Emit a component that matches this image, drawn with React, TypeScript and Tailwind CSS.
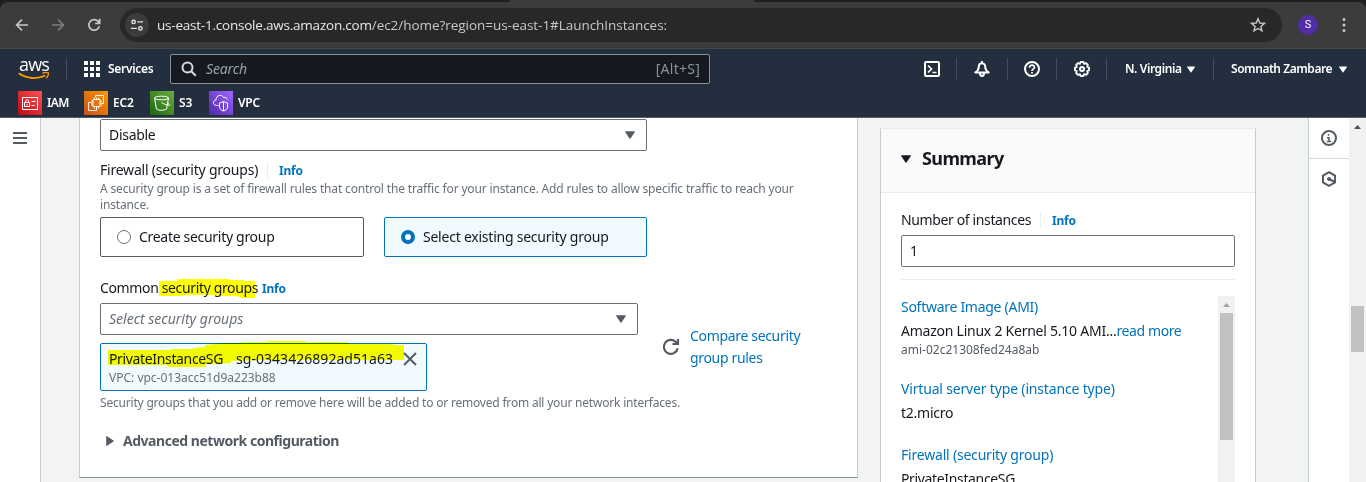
import React from "react";

const Caret = ({ className = "" }: { className?: string }) => (
  <svg className={`shrink-0 ${className}`} width="10" height="8" viewBox="0 0 10 8" fill="currentColor">
    <path d="M0.6 0.2h8.8c.5 0 .7.5.4.9L5.5 7.5c-.2.4-.8.4-1 0L.2 1.1C-.1.7.1.2.6.2z" />
  </svg>
);

const Info = ({ className = "" }: { className?: string }) => (
  <a className={`pt-[2px] text-[12px] font-bold tracking-[-0.2px] text-[#0073bb] ${className}`}>Info</a>
);

function BrowserBar() {
  return (
    <div className="h-[49px] bg-[#202020] pt-[2px]">
      <div className="relative flex h-[47px] items-center rounded-t-[8px] border-b border-[#4a4a4a] bg-[#3c3c3c]">
        <div className="absolute -top-[2px] left-[510px] h-[2px] w-[244px] bg-[#3c3c3c]" />
        <svg className="ml-[14px] shrink-0" width="16" height="16" viewBox="0 0 16 16" fill="none" stroke="#c7c7c7" strokeWidth="1.6">
          <path d="M14 8H3M8 2.6L2.6 8L8 13.4" />
        </svg>
        <svg className="ml-[20px] shrink-0" width="16" height="16" viewBox="0 0 16 16" fill="none" stroke="#7d7d7d" strokeWidth="1.6">
          <path d="M2 8h11M8 2.6L13.4 8L8 13.4" />
        </svg>
        <svg className="ml-[20px] shrink-0" width="16" height="16" viewBox="0 0 16 16" fill="none" stroke="#c7c7c7" strokeWidth="1.7">
          <path d="M13.3 9.2A5.3 5.3 0 1 1 12 4.2L13.6 6M13.7 1.8V6.3H9.2" />
        </svg>
        <div className="ml-[18px] flex h-[34px] w-[1162px] items-center rounded-full bg-[#282828]">
          <div className="ml-[5px] flex h-6 w-6 items-center justify-center rounded-full bg-[#3c3c3c]">
            <svg width="14" height="14" viewBox="0 0 14 14" fill="none" stroke="#e3e3e3" strokeWidth="1.4">
              <circle cx="3.6" cy="3.9" r="1.7" />
              <path d="M7.3 3.9H13M1 10.4h5.8" />
              <circle cx="10.4" cy="10.4" r="1.7" />
            </svg>
          </div>
          <div className="ml-2 pt-px font-['Open_Sans'] text-[13.5px] whitespace-nowrap text-[#c7c7c7]">
            <span className="tracking-[-0.22px] text-[#e8e8e8]">us-east-1.console.aws.amazon.com</span>
            <span className="tracking-[-0.04px]">/ec2/home?region=us-east-1#LaunchInstances:</span>
          </div>
          <svg className="mr-[16px] ml-auto" width="16" height="16" viewBox="0 0 16 16" fill="none" stroke="#c7c7c7" strokeWidth="1.4">
            <path d="M8 1.8l1.8 4.2 4.6.4-3.5 3 1.1 4.5L8 11.5l-4 2.4 1.1-4.5-3.5-3 4.6-.4z" />
          </svg>
        </div>
        <div className="ml-[16px] flex h-5 w-5 items-center justify-center rounded-full bg-[#512da8] pt-px font-['Roboto'] text-[11px] text-white">S</div>
        <svg className="ml-[24px]" width="4" height="16" viewBox="0 0 4 16" fill="#c7c7c7">
          <circle cx="2" cy="2.6" r="1.5" />
          <circle cx="2" cy="8" r="1.5" />
          <circle cx="2" cy="13.4" r="1.5" />
        </svg>
      </div>
    </div>
  );
}

const Divider = ({ className = "" }: { className?: string }) => (
  <div className={`h-[22px] w-px shrink-0 bg-[#414d5c] ${className}`} />
);

function NavBar() {
  return (
    <div className="flex h-10 items-center bg-[#232f3e] text-[12px] font-semibold whitespace-nowrap text-white">
      <div className="relative ml-[18px] h-[22px] w-[31px]">
        <div className="absolute -top-[5px] left-px font-['Open_Sans'] text-[18px] leading-[22px] font-medium tracking-[-0.8px]">aws</div>
        <svg className="absolute top-[14px] left-0" width="31" height="9" viewBox="0 0 31 9" fill="none">
          <path d="M.8 1.3C8.500 6.800 19.500 7.600 27.200 3.500" stroke="#ff9900" strokeWidth="1.900" />
          <path d="M24.500 1.300C27 .300 29.700.300 30.200 1C30.700 2 29.700 4.500 28.200 6.300" stroke="#ff9900" strokeWidth="1.400" />
        </svg>
      </div>
      <Divider className="ml-[17px]" />
      <svg className="ml-[17px]" width="16" height="16" viewBox="0 0 16 16" fill="white">
        {[0, 6, 12].map((y) => [0, 6, 12].map((x) => <rect key={`${x}-${y}`} x={x} y={y} width="4" height="4" />))}
      </svg>
      <div className="ml-2 w-[62px] tracking-[-0.3px]">Services</div>
      <div className="flex h-[30px] w-[540px] items-center rounded-[2px] border border-[#879596] bg-[#16191f] font-normal text-[#879596]">
        <svg className="ml-[10px]" width="16" height="16" viewBox="0 0 16 16" fill="none" stroke="#d5dbdb" strokeWidth="2">
          <circle cx="6.500" cy="6.500" r="5" />
          <path d="M10.200 10.200l4.600 4.600" />
        </svg>
        <div className="ml-[9px] pb-px text-[14px] tracking-[-0.15px] text-[#95a5a6] italic">Search</div>
        <div className="mr-[9px] ml-auto pb-px text-[14px] tracking-[0.25px]">[Alt+S]</div>
      </div>
      <svg className="ml-[214px]" width="16" height="16" viewBox="0 0 16 16" fill="none" stroke="white" strokeWidth="2">
        <rect x="1" y="1" width="14" height="14" rx="1" />
        <path d="M4 4.500L7.500 8L4 11.500M8.500 11.500h4" strokeWidth="1.700" />
      </svg>
      <Divider className="ml-[16px]" />
      <svg className="ml-[17px]" width="16" height="16" viewBox="0 0 16 16" fill="none" stroke="white" strokeWidth="2" strokeLinejoin="round">
        <path d="M8 0v2.300M8 2.300C5.700 2.300 4.700 4 4.700 6.500C4.700 8.700 3 10.200 1.300 11.500H14.700C13 10.200 11.300 8.700 11.300 6.500C11.300 4 10.300 2.300 8 2.300zM6 12c0 3.900 4 3.900 4 0" />
      </svg>
      <Divider className="ml-[17px]" />
      <svg className="ml-[16px]" width="16" height="16" viewBox="0 0 16 16" fill="none" stroke="white" strokeWidth="2">
        <circle cx="8" cy="8" r="7" />
        <path d="M5.500 6.700C5.500 3.300 10.500 3.500 10.500 6.300C10.500 8 8 7.800 8 10M8 11v1.600" strokeWidth="1.700" />
      </svg>
      <Divider className="ml-[16px]" />
      <svg className="ml-[17px]" width="16" height="16" viewBox="0 0 16 16" fill="none" stroke="white" strokeWidth="2" strokeLinejoin="round">
        <path d="M6.600 1h2.800l.7 1.800 2-.6 1.700 1.700-.6 2 1.800.7v2.800l-1.800.7.6 2-1.700 1.700-2-.6-.7 1.800H6.600l-.7-1.800-2 .6-1.700-1.700.6-2L1 9.400V6.600l1.800-.7-.6-2 1.700-1.700 2 .6z" strokeWidth="1.900" />
        <circle cx="8" cy="8" r="2" />
      </svg>
      <Divider className="ml-[16px]" />
      <div className="ml-[18px] w-[57px] tracking-[-0.4px]">N. Virginia</div>
      <Caret className="ml-[5px] h-[7px] w-[8px]" />
      <Divider className="ml-[18px]" />
      <div className="ml-[17px] w-[102px] tracking-[-0.45px]">Somnath Zambare</div>
      <Caret className="ml-[6px] h-[7px] w-[8px]" />
    </div>
  );
}

function Favorites() {
  return (
    <div className="flex h-[29px] items-center border-b border-[#545b64] bg-[#232f3e] text-[12px] font-semibold text-white">
      <div className="flex w-[66px] items-center gap-[5px] pl-[18px]">
        <svg className="shrink-0" width="24" height="24" viewBox="0 0 24 24">
          <linearGradient id="iam" x1="0" y1="1" x2="1" y2="0"><stop stopColor="#bd0816" /><stop offset="1" stopColor="#ff5252" /></linearGradient>
          <path fill="url(#iam)" d="M0 0h24v24H0z" />
          <g fill="none" stroke="white">
            <path d="M4.500 6.500h15v12h-15zM6.500 11.500h5v4h-5zM7.500 11.500V9.700q1.500-2.200 3 0v1.800M9 13v1.500M13.500 10.500h4M13.500 14.500h3" />
          </g>
        </svg>
        <span className="tracking-[-0.6px]">IAM</span>
      </div>
      <div className="flex w-[66px] items-center gap-[5px] pl-[18px]">
        <svg className="shrink-0" width="24" height="24" viewBox="0 0 24 24">
          <linearGradient id="ec2" x1="0" y1="1" x2="1" y2="0"><stop stopColor="#c8511b" /><stop offset="1" stopColor="#ff9900" /></linearGradient>
          <path fill="url(#ec2)" d="M0 0h24v24H0z" />
          <g fill="none" stroke="white">
            <path d="M9 8.500h7v7H9zM10.500 6.500v2M12.500 6.500v2M14.500 6.500v2M10.500 15.500v2M12.500 15.500v2M14.500 15.500v2M7 10h2M7 12h2M7 14h2M16 10h2M16 12h2M16 14h2M11.500 6.500v-2h8v8h-2M7.500 11.500h-3v8h8v-3" strokeWidth=".9" />
          </g>
        </svg>
        <span className="tracking-[-0.2px]">EC2</span>
      </div>
      <div className="flex w-[59px] items-center gap-[5px] pl-[18px]">
        <svg className="shrink-0" width="24" height="24" viewBox="0 0 24 24">
          <linearGradient id="s3" x1="0" y1="1" x2="1" y2="0"><stop stopColor="#1b660f" /><stop offset="1" stopColor="#6cae3e" /></linearGradient>
          <path fill="url(#s3)" d="M0 0h24v24H0z" />
          <g fill="none" stroke="white">
            <ellipse cx="11.500" cy="7" rx="7" ry="1.800" />
            <path d="M4.500 7l2 11c1.500 1.700 8.500 1.700 10 0l2-11M11.500 11.500c3 2 8 3.500 8.300 2.500c.2-.8-1.500-1.500-2.500-2" />
          </g>
        </svg>
        <span>S3</span>
      </div>
      <div className="flex items-center gap-[5px] pl-[18px]">
        <svg className="shrink-0" width="24" height="24" viewBox="0 0 24 24">
          <linearGradient id="vpc" x1="0" y1="1" x2="1" y2="0"><stop stopColor="#4d27a8" /><stop offset="1" stopColor="#a166ff" /></linearGradient>
          <path fill="url(#vpc)" d="M0 0h24v24H0z" />
          <g fill="none" stroke="white">
            <path d="M9.500 14.500H7.500C3.500 14 3.500 9.500 7 9C7 4 13 2.800 14.500 6.500C17 5.800 18 7 18 8.500M14.500 10.500l4 1.500v4c0 2-2 3.500-4 4c-2-.5-4-2-4-4v-4zM14.500 10.500v9.500" />
          </g>
        </svg>
        <span className="tracking-[-0.2px]">VPC</span>
      </div>
    </div>
  );
}

function NetworkCard() {
  return (
    <div className="h-[360px] w-[779px] shrink-0 border border-t-0 border-[#c6cdd0] border-b-[#879596] bg-white px-5">
      <div className="mt-px flex h-8 w-[547px] items-center justify-between rounded-[2px] border border-[#687078] pr-[11px] pl-2">
        <span className="pb-px tracking-[-0.3px]">Disable</span>
        <Caret className="text-[#545b64]" />
      </div>
      <div className="mt-2 flex h-[22px] items-center">
        <span className="w-[159px] pb-px tracking-[-0.22px] whitespace-nowrap">Firewall (security groups)</span>
        <div className="ml-2 h-4 w-px bg-[#eaeded]" />
        <Info className="ml-[11px]" />
      </div>
      <div className="text-[12px] leading-4 tracking-[-0.155px] whitespace-nowrap text-[#687078]">
        A security group is a set of firewall rules that control the traffic for your instance. Add rules to allow specific traffic to reach your
        <br />
        instance.
      </div>
      <div className="mt-1 flex gap-5">
        <div className="flex h-10 w-[264px] items-center rounded-[2px] border border-[#545b64] pl-4">
          <div className="h-[14px] w-[14px] rounded-full border border-[#687078]" />
          <span className="ml-2 pb-px tracking-[-0.3px]">Create security group</span>
        </div>
        <div className="flex h-10 w-[263px] items-center rounded-[2px] border border-[#0073bb] bg-[#f1faff] pl-4">
          <div className="h-[14px] w-[14px] rounded-full border-[4px] border-[#0073bb] bg-white" />
          <span className="ml-2 pb-px tracking-[-0.23px]">Select existing security group</span>
        </div>
      </div>
      <div className="mt-[20px] flex">
        <div className="w-[538px]">
          <div className="relative flex h-[22px] items-center">
            <svg className="absolute top-[2px] left-[59px]" width="100" height="22" viewBox="0 0 100 22" fill="#ffff00">
              <path d="M0 2h18V0h22v-1h30v2h15v1h11l0 17H83l-6-2H61l-8-1H30l-10 1H0z" />
            </svg>
            <span className="relative w-[159px] pb-px tracking-[-0.36px] whitespace-nowrap">Common security groups</span>
            <Info className="relative ml-[3px]" />
          </div>
          <div className="mt-1 flex h-8 items-center justify-between rounded-[2px] border border-[#687078] pr-[11px] pl-2">
            <span className="pb-px text-[#687078] italic">Select security groups</span>
            <Caret className="text-[#545b64]" />
          </div>
          <div className="relative mt-2 h-12 w-[327px] rounded-[2px] border border-[#0073bb] bg-[#f1faff] pl-2">
            <div className="flex h-[22px] items-center pt-[7px] whitespace-nowrap">
              <span className="w-[127px] tracking-[-0.35px]">PrivateInstanceSG</span>
              <span className="tracking-[0.04px]">sg-0343426892ad51a63</span>
            </div>
            <div className="mt-[4px] text-[12px] leading-[16px] text-[#687078]">VPC: vpc-013acc51d9a223b88</div>
            <svg className="absolute top-[8px] right-[9px]" width="14" height="14" viewBox="0 0 14 14" stroke="#545b64" strokeWidth="2">
              <path d="M1 1l12 12M13 1L1 13" />
            </svg>
            <svg className="absolute -top-[3px] left-[7px] mix-blend-multiply" width="297" height="26" viewBox="0 0 297 26">
              <path fill="#ffff00" d="M0 9h63V8h22V7l12-1V4l20-2h16V1h27V0h38v1h42v2h45v1h11v15H153l-30 1v2l-25 1v3H60v-2H0z" />
            </svg>
          </div>
        </div>
        <svg className="mt-[61px] ml-6 shrink-0" width="18" height="18" viewBox="0 0 18 18" fill="none" stroke="#545b64" strokeWidth="2.200">
          <path d="M15.700 10.300A7 7 0 1 1 14.300 4.500L15.500 6M16 1V6H10.500" />
        </svg>
        <div className="mt-[48px] ml-[10px] text-[14px] leading-[22px] tracking-[-0.33px] whitespace-nowrap text-[#0073bb]">
          Compare security
          <br />
          group rules
        </div>
      </div>
      <div className="mt-1 text-[12px] leading-4 tracking-[-0.195px] whitespace-nowrap text-[#687078]">
        Security groups that you add or remove here will be added to or removed from all your network interfaces.
      </div>
      <div className="mt-[19px] flex h-[22px] items-center text-[#545b64]">
        <Caret className="ml-[5px] -rotate-90" />
        <span className="ml-2 pb-[2px] font-bold tracking-[-0.47px]">Advanced network configuration</span>
      </div>
    </div>
  );
}

function SummaryCard() {
  return (
    <div className="mt-[10px] w-[376px] shrink-0 border border-b-0 border-[#c6cdd0] border-t-[#eaeded] bg-white">
      <div className="flex h-[64px] items-center border-b border-[#eaeded] bg-[#fafafa] pb-[3px] pl-5">
        <Caret />
        <span className="ml-[11px] pb-[2px] text-[18px] font-bold tracking-[-0.6px]">Summary</span>
      </div>
      <div className="px-5 pt-[16px]">
        <div className="flex h-[22px] items-center">
          <span className="w-[131px] pb-px tracking-[-0.37px] whitespace-nowrap">Number of instances</span>
          <div className="ml-2 h-4 w-px bg-[#eaeded]" />
          <Info className="ml-[11px]" />
        </div>
        <div className="mt-1 flex h-8 items-center rounded-[2px] border border-[#687078] pb-px pl-2">1</div>
        <div className="mt-3 h-px bg-[#eaeded]" />
        <div className="mt-4 flex h-[200px] justify-between">
          <div className="leading-[22px] tracking-[-0.24px] whitespace-nowrap">
            <div className="tracking-[-0.28px] text-[#0073bb]">Software Image (AMI)</div>
            <div className="mt-[2px]">
              Amazon Linux 2 Kernel 5.10 AMI...<span className="tracking-[-0.4px] text-[#0073bb]">read more</span>
            </div>
            <div className="text-[12px] leading-4 tracking-normal text-[#545b64]">ami-02c21308fed24a8ab</div>
            <div className="mt-5 tracking-[-0.17px] text-[#0073bb]">Virtual server type (instance type)</div>
            <div className="mt-[2px]">t2.micro</div>
            <div className="mt-5 tracking-[-0.2px] text-[#0073bb]">Firewall (security group)</div>
            <div className="mt-[2px] tracking-[-0.35px]">PrivateInstanceSG</div>
          </div>
          <div className="flex w-[17px] flex-col items-center bg-[#f1f1f1]">
            <svg className="mt-[7px]" width="7" height="4" viewBox="0 0 7 4" fill="#a3a3a3"><path d="M0 4L3.500 0L7 4z" /></svg>
            <div className="mt-[6px] h-[127px] w-[13px] bg-[#c1c1c1]" />
          </div>
        </div>
      </div>
    </div>
  );
}

export default function App() {
  return (
    <div className="h-[482px] w-[1366px] overflow-hidden bg-[#f2f3f3] font-['Noto_Sans',sans-serif] text-[14px] text-[#16191f]">
      <BrowserBar />
      <NavBar />
      <Favorites />
      <div className="flex h-[364px] overflow-hidden">
        <div className="w-[41px] shrink-0 border-r border-[#c6cdd0] bg-white">
          <svg className="mt-[14px] ml-[13px]" width="14" height="12" viewBox="0 0 14 12" fill="#545b64">
            <path d="M0 0h14v2H0zM0 5h14v2H0zM0 10h14v2H0z" />
          </svg>
        </div>
        <div className="flex flex-1 gap-[22px] pl-[38px]">
          <NetworkCard />
          <SummaryCard />
        </div>
        <div className="w-[41px] shrink-0 border-l border-[#c6cdd0] bg-white">
          <div className="flex h-[41px] items-center justify-center border-b border-[#d5dbdb]">
            <svg width="16" height="16" viewBox="0 0 16 16" fill="none" stroke="#545b64" strokeWidth="2">
              <circle cx="8" cy="8" r="7" />
              <path d="M7.500 4v1.800M6 7.800h2V11M5.800 11.500h4.400" strokeWidth="1.500" />
            </svg>
          </div>
          <div className="flex h-10 items-center justify-center">
            <svg width="16" height="16" viewBox="0 0 16 16" fill="none" stroke="#545b64" strokeWidth="2">
              <path d="M8 1.200l6 3.400v6.800l-6 3.400-6-3.400V4.600z" />
              <circle cx="8" cy="8" r="1.500" fill="#545b64" strokeWidth="1" />
              <path d="M8 8l6 3" />
            </svg>
          </div>
        </div>
        <div className="flex w-[17px] shrink-0 flex-col items-center bg-[#f1f1f1]">
          <svg className="mt-[7px]" width="7" height="4" viewBox="0 0 7 4" fill="#505050"><path d="M0 4L3.500 0L7 4z" /></svg>
          <div className="mt-[177px] h-[46px] w-[13px] bg-[#c1c1c1]" />
        </div>
      </div>
    </div>
  );
}
